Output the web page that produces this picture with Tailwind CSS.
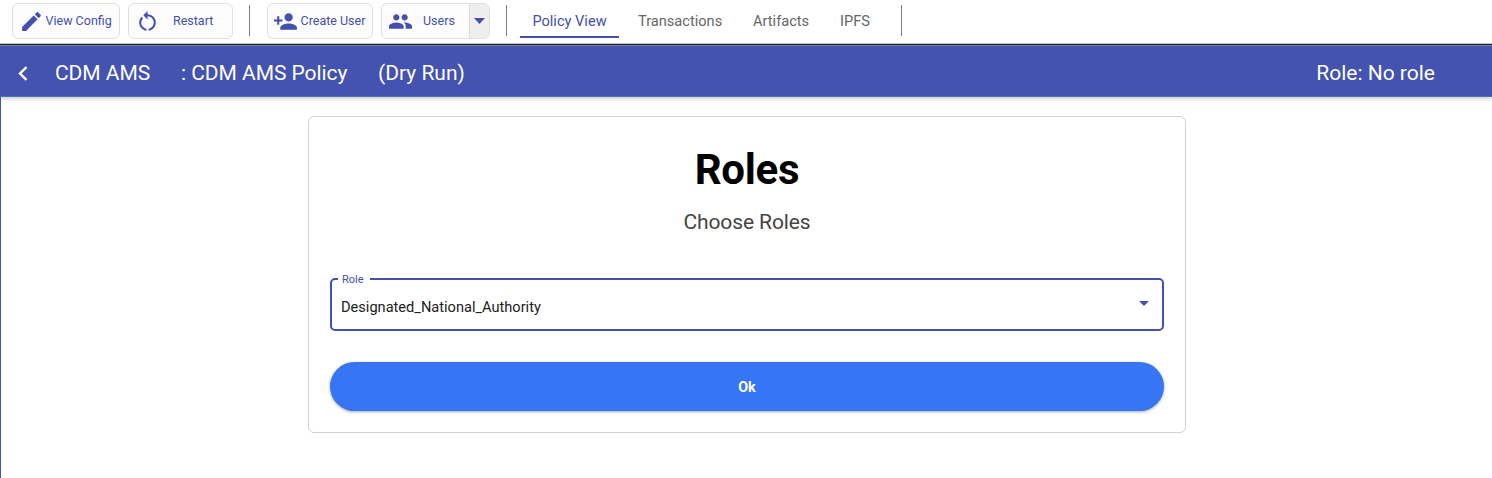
<!DOCTYPE html>
<html lang="en">
<head>
<meta charset="utf-8">
<title>Policy View</title>
<script src="https://cdn.jsdelivr.net/npm/@tailwindcss/browser@4"></script>
</head>
<body class="h-[478px] overflow-hidden bg-white font-['Roboto',sans-serif] text-black">
<header class="flex h-[43px] items-start pl-[11.5px] pt-[3px] text-[12.5px] text-[#4350af]">
  <button class="flex h-9 w-[108.5px] items-center rounded-md border border-[#e0e0e0] bg-[#fcfcfc] pl-[6px]">
    <svg class="size-[25px] shrink-0" viewBox="0 0 24 24" fill="currentColor"><path d="M3 17.25V21h3.75L17.81 9.94l-3.75-3.75L3 17.25zM20.71 7.04c.39-.39.39-1.02 0-1.41l-2.34-2.34c-.39-.39-1.02-.39-1.41 0l-1.83 1.83 3.75 3.75 1.83-1.83z"/></svg>
    <span class="ml-[2px] whitespace-nowrap">View Config</span>
  </button>
  <button class="ml-2 flex h-9 w-[104.5px] items-center rounded-md border border-[#e0e0e0] bg-[#fcfcfc] pl-[6px]">
    <svg class="size-[25px] shrink-0" viewBox="0 0 24 24" fill="currentColor"><path d="M12 5V2L8 6l4 4V7c3.31 0 6 2.69 6 6 0 2.97-2.17 5.43-5 5.91v2.02c3.95-.49 7-3.85 7-7.93 0-4.42-3.58-8-8-8zM6 13c0-1.65.67-3.15 1.76-4.24L6.34 7.34C4.9 8.79 4 10.79 4 13c0 4.08 3.05 7.44 7 7.93v-2.02c-2.83-.48-5-2.94-5-5.91z"/></svg>
    <span class="ml-[13px]">Restart</span>
  </button>
  <div class="ml-[16.5px] mt-[2px] h-[31px] w-px bg-[#808080]"></div>
  <button class="ml-[16.500px] flex h-9 w-[106.500px] items-center rounded-md border border-[#e0e0e0] bg-[#fcfcfc] pl-[5.500px]">
    <svg class="size-[25px] shrink-0" viewBox="0 0 24 24" fill="currentColor"><path d="M15 12c2.21 0 4-1.79 4-4s-1.79-4-4-4-4 1.79-4 4 1.79 4 4 4zm-9-2V7H4v3H1v2h3v3h2v-3h3v-2H6zm9 4c-2.67 0-8 1.34-8 4v2h16v-2c0-2.66-5.33-4-8-4z"/></svg>
    <span class="ml-[2.500px] whitespace-nowrap">Create User</span>
  </button>
  <div class="ml-2 flex h-9 w-[109px] overflow-hidden rounded-md border border-[#e0e0e0] bg-[#fcfcfc]">
    <button class="flex w-[87px] items-center pl-[6px]">
      <svg class="size-[25px] shrink-0" viewBox="0 0 24 24" fill="currentColor"><path d="M16 11c1.66 0 2.99-1.34 2.99-3S17.66 5 16 5c-1.66 0-3 1.34-3 3s1.34 3 3 3zm-8 0c1.66 0 2.99-1.34 2.99-3S9.66 5 8 5C6.34 5 5 6.34 5 8s1.34 3 3 3zm0 2c-2.33 0-7 1.17-7 3.5V19h14v-2.5c0-2.33-4.67-3.5-7-3.5zm8 0c-.29 0-.62.02-.97.05 1.16.84 1.97 1.97 1.97 3.45V19h6v-2.5c0-2.33-4.67-3.5-7-3.5z"/></svg>
      <span class="ml-[10px]">Users</span>
    </button>
    <button class="flex flex-1 items-center justify-center border-l border-[#dcdcdc] bg-[#eeeeee] pr-px">
      <svg class="h-[6px] w-[11px]" viewBox="0 0 11 6" fill="currentColor"><path d="M0 0h11L5.500 6z"/></svg>
    </button>
  </div>
  <div class="ml-4 mt-[2px] h-[31px] w-px bg-[#808080]"></div>
  <nav class="flex h-[35px] text-[14.6px] text-[#666]">
    <a class="ml-[13px] flex w-[99px] items-center justify-center whitespace-nowrap border-b-2 border-[#4350af] pt-[4px] text-[#4350af]">Policy View</a>
    <a class="ml-[19px] flex w-[84px] items-center pt-[2px]">Transactions</a>
    <a class="ml-[31px] flex w-[56px] items-center pt-[2px]">Artifacts</a>
    <a class="ml-[31px] flex w-[31px] items-center pt-[2px]">IPFS</a>
  </nav>
  <div class="ml-[30px] mt-[2px] h-[31px] w-px bg-[#808080]"></div>
</header>
<div class="h-[3px] border-y border-t-[#c4c4c4] border-b-[#8484a4] bg-[#202028]"></div>
<div class="flex h-[51px] items-center border-b border-[#4578a8] bg-[#4452b0] pl-[18px] pr-[57px] pt-[4px] text-[21px] text-white shadow-[0_2px_4px_rgba(0,0,0,0.2)]">
  <svg class="h-[15px] w-[10px]" viewBox="0 0 10 15" fill="none" stroke="currentColor" stroke-width="2.400"><path d="M8.500 1.200L2 7.500l6.500 6.300"/></svg>
  <span class="ml-[27px] w-[126px] pt-px tracking-[-0.05px]">CDM AMS</span>
  <span class="w-[197px] pt-px tracking-[-0.05px]">: CDM AMS Policy</span>
  <span class="pt-px">(Dry Run)</span>
  <span class="ml-auto pt-px">Role: No role</span>
</div>
<main class="h-[381px] border-l border-[#4452b0] pl-[307px] pt-[19px]">
  <section class="flex h-[317px] w-[878px] flex-col items-center rounded-md border border-[#d2d2d2] px-[21px]">
    <h1 class="mt-[28px] text-[42px] font-bold leading-[50px] tracking-[-0.3px]">Roles</h1>
    <p class="mt-[14px] text-[21px] leading-[26px] tracking-[-0.1px] text-[#444]">Choose Roles</p>
    <fieldset class="mt-[37px] h-[59px] w-[834px] rounded-[5px] border-2 border-[#4350af] pl-[9px] pr-[13px]">
      <legend class="-ml-[3px] h-[14px] w-[32px] pl-[4px] text-[11px] leading-[14px] text-[#4350af]"><span class="block pt-px">Role</span></legend>
      <div class="flex h-[36px] items-center justify-between pt-[8px] text-[14.600px] text-[#222]"><span>Designated_National_Authority</span>
      <svg class="mb-[9px] h-[5px] w-[10px] text-[#4350af]" viewBox="0 0 10 5" fill="currentColor"><path d="M0 0h10L5 5z"/></svg></div>
    </fieldset>
    <button class="mt-[31px] h-[49px] w-[834px] rounded-full bg-[#3676f5] pt-[3px] text-[14.300px] font-bold text-white shadow-[0_1px_3px_rgba(0,0,0,0.35)]">Ok</button>
  </section>
</main>
</body>
</html>
